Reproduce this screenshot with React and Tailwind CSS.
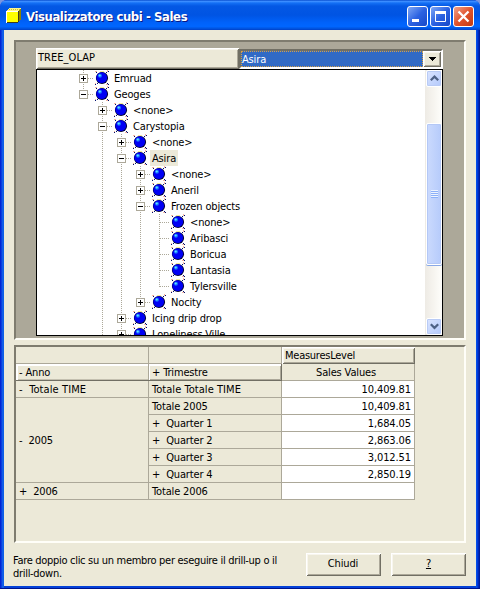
import React from "react";

const WINDOW_FONT = "font-['DejaVu_Sans_Condensed','DejaVu_Sans',sans-serif]";

const sunken =
  "border-2 border-t-[#7f7c6f] border-l-[#7f7c6f] border-r-[#fffef8] border-b-[#fffef8]";
const raised =
  "bg-[#ece9d8] shadow-[inset_1px_1px_0_#fff,inset_-1px_-1px_0_#716f64,inset_2px_2px_0_#f8f6ee,inset_-2px_-2px_0_#aca899]";

// Each row: depth, expander state, label, and which ancestor columns keep a guide line.
const tree = [
  { box: "+", label: "Emruad", own: "full", guides: [] },
  { box: "-", label: "Geoges", own: "top", guides: [] },
  { box: "+", label: "<none>", own: "full", guides: [0] },
  { box: "-", label: "Carystopia", own: "full", guides: [0] },
  { box: "+", label: "<none>", own: "full", guides: [0, 1] },
  { box: "-", label: "Asira", own: "full", guides: [0, 1], selected: true },
  { box: "+", label: "<none>", own: "full", guides: [0, 1, 1] },
  { box: "+", label: "Aneril", own: "full", guides: [0, 1, 1] },
  { box: "-", label: "Frozen objects", own: "full", guides: [0, 1, 1] },
  { label: "<none>", own: "full", guides: [0, 1, 1, 1] },
  { label: "Aribasci", own: "full", guides: [0, 1, 1, 1] },
  { label: "Boricua", own: "full", guides: [0, 1, 1, 1] },
  { label: "Lantasia", own: "full", guides: [0, 1, 1, 1] },
  { label: "Tylersville", own: "top", guides: [0, 1, 1, 1] },
  { box: "+", label: "Nocity", own: "top", guides: [0, 1, 1] },
  { box: "+", label: "Icing drip drop", own: "full", guides: [0, 1] },
  { box: "+", label: "Loneliness-Ville", own: "full", guides: [0, 1] },
];

const quarters = [
  ["Totale 2005", "10,409.81"],
  ["+\u00a0 Quarter 1", "1,684.05"],
  ["+\u00a0 Quarter 2", "2,863.06"],
  ["+\u00a0 Quarter 3", "3,012.51"],
  ["+\u00a0 Quarter 4", "2,850.19"],
];

function Guide() {
  return (
    <svg className="block h-4 w-[19px] shrink-0" shapeRendering="crispEdges">
      <path d="M9.5 0V16" stroke="#aca899" strokeDasharray="1 1" />
    </svg>
  );
}

function Junction({ box, own }) {
  return (
    <svg className="block h-4 w-[19px] shrink-0" shapeRendering="crispEdges" fill="none">
      <path d={own === "top" ? "M9.5 0V9" : "M9.5 0V16"} stroke="#aca899" strokeDasharray="1 1" />
      <path d="M10 8.5H19" stroke="#aca899" strokeDasharray="1 1" />
      {box && <rect x="5.5" y="4.5" width="8" height="8" fill="#fff" stroke="#aca899" />}
      {box && <path d="M7 8.5H12" stroke="#000" />}
      {box === "+" && <path d="M9.5 6V11" stroke="#000" />}
    </svg>
  );
}

function Ball() {
  return (
    <svg className="ml-px block h-4 w-4 shrink-0" viewBox="0 0 16 16">
      <g shapeRendering="crispEdges">
        <path d="M1 1h2v1h-2zM13 0h1v2h-1zM1 13h1v2h-1zM12 14h2v1h-2z" fill="#f5b8a0" />
        <path d="M2 2h1v1h-1zM12 2h1v1h-1zM14 1h1v1h-1zM1 14h1v1h-1zM3 13h1v1h-1zM14 14h1v1h-1zM13 13h1v1h-1z" fill="#001070" />
        <path d="M6 1h4v1h-4zM3 4h1v1h-1zM3 11h1v1h-1z" fill="#f4ec9a" />
      </g>
      <circle cx="8" cy="8" r="6.1" fill="#000038" />
      <circle cx="7.7" cy="7.7" r="5.4" fill="#0000f4" />
      <circle cx="6" cy="5.8" r="2" fill="#1673ff" />
      <circle cx="5.7" cy="5.5" r="1.1" fill="#5fe0ff" />
    </svg>
  );
}

function TreeRow({ row }) {
  return (
    <div className="flex h-4 shrink-0 items-center pl-[37px]">
      {row.guides.map((on, i) =>
        on ? <Guide key={i} /> : <span key={i} className="h-4 w-[19px] shrink-0" />
      )}
      <Junction box={row.box} own={row.own} />
      <Ball />
      <span
        className={`ml-[2px] h-4 whitespace-pre px-[2px] leading-[17px] ${
          row.selected ? "bg-[#ece9d8]" : ""
        }`}
      >
        {row.label}
      </span>
    </div>
  );
}

function ScrollButton({ down }) {
  return (
    <div className="flex h-[17px] w-[16px] items-center justify-center rounded-[2px] border border-white bg-gradient-to-br from-[#dbe5ff] to-[#b3c9fb] shadow-[inset_0_0_0_1px_#b9cbf5]">
      <svg width="9" height="7" viewBox="0 0 9 7" fill="none">
        <path d={down ? "M.8 1.2 4.5 4.9 8.2 1.2" : "M.8 5.3 4.5 1.6 8.2 5.3"} stroke="#4d6185" strokeWidth="2.2" />
      </svg>
    </div>
  );
}

function CaptionButton({ close, children }) {
  return (
    <div
      className={`flex h-[21px] w-[21px] items-center justify-center rounded-[3px] border border-white ${
        close
          ? "bg-gradient-to-br from-[#f0a088] via-[#e0532c] to-[#c23a10]"
          : "bg-gradient-to-br from-[#7fa6f4] via-[#2c62e2] to-[#1748c8]"
      }`}
    >
      <svg width="19" height="19" viewBox="0 0 19 19" fill="none">
        {children}
      </svg>
    </div>
  );
}

function Label({ children }) {
  return (
    <div className="h-[17px] whitespace-pre border-b border-r border-[#aca899] pl-[3px] leading-[18px]">
      {children}
    </div>
  );
}

function Value({ children }) {
  return (
    <div className="h-[17px] border-b border-r border-[#aca899] bg-white pr-[3px] text-right leading-[18px] tracking-[-0.1px]">
      {children}
    </div>
  );
}

export default function App() {
  return (
    <div className="h-[589px] w-[480px] overflow-hidden bg-[#7a96df]">
      <div
        className={`flex h-full w-full flex-col overflow-hidden rounded-t-[7px] bg-[#0831d9] text-[11px] tracking-[-0.15px] text-black ${WINDOW_FONT}`}
      >
        <header className="flex h-[30px] shrink-0 items-center bg-[linear-gradient(180deg,#0a4fd0_0%,#3a8cff_5%,#1470f5_10%,#0458e4_20%,#0054e3_50%,#0062fa_75%,#0066ff_88%,#0054e0_95%,#0040c8_100%)] pl-[6px] pr-[6px] pt-[3px]">
          <svg className="-mt-0.5 shrink-0" width="16" height="16" viewBox="0 0 16 16" shapeRendering="crispEdges">
            <path d="M0 3 3 0H15V11L12 14H0Z" fill="#fff68a" />
            <path d="M12 3 15 0V11L12 14Z" fill="#8a8200" />
            <path d="M0 3H12V14H0Z" fill="#ffff00" />
            <path d="M0 3H12M.5 3V14M0 14H12" stroke="#fff" strokeWidth="1" />
            <path d="M12.5 3V14M1 14.5H12" stroke="#3d3b20" />
            <path d="M3 1.5H14" stroke="#c9be38" strokeDasharray="1 1" />
          </svg>
          <h1 className="ml-1 flex-1 whitespace-pre pt-px text-[13px] font-bold leading-4 tracking-[-0.43px] text-white [text-shadow:1px_1px_0_#0a1883]">
            Visualizzatore cubi - Sales
          </h1>
          <div className="flex gap-[2px]">
            <CaptionButton>
              <path d="M4 13.5H11" stroke="#fff" strokeWidth="3" />
            </CaptionButton>
            <CaptionButton>
              <path d="M4.5 5V14.5H14.5V5" stroke="#fff" />
              <path d="M4 5.5H15" stroke="#fff" strokeWidth="3" />
            </CaptionButton>
            <CaptionButton close>
              <path d="M4.5 4.5 14.5 14.5M14.5 4.5 4.5 14.5" stroke="#fff" strokeWidth="2.3" />
            </CaptionButton>
          </div>
        </header>

        <div className="flex min-h-0 flex-1 border-b border-[#00138c] bg-[linear-gradient(90deg,#0019cf_0,#0831d9_1px,#166aee_3px,#0855dd_4px,#0855dd_476px,#0046f0_477px,#0030c8_478px,#00138c_480px)] px-1">
          <main className="flex min-w-0 flex-1 flex-col border-b-2 border-[#0441d8] bg-[#ece9d8] px-[10px] pt-[10px]">
            <section className={`h-[300px] shrink-0 bg-[#aca899] pl-5 pt-[6px] ${sunken}`}>
              <div className="flex h-[21px] w-[407px]">
                <div className={`h-[21px] w-[203px] pl-[2px] leading-5 tracking-[0.05px] ${raised}`}>TREE_OLAP</div>
                <div className="mt-px flex h-5 w-[204px] border-2 border-b-white border-l-[#716f64] border-r-white border-t-[#716f64] bg-white">
                  <div className="h-4 w-[182px] bg-[#316ac5] pl-px leading-[17px] text-white outline-1 -outline-offset-1 outline-dotted outline-[#d5a04a]">
                    Asira
                  </div>
                  <div className={`flex h-4 flex-1 items-center justify-center ${raised}`}>
                    <svg width="7" height="4" viewBox="0 0 7 4" shapeRendering="crispEdges">
                      <path d="M0 0H7V1H6V2H5V3H4V4H3V3H2V2H1V1H0Z" />
                    </svg>
                  </div>
                </div>
              </div>
              <div className="flex h-[267px] w-[407px] border border-black bg-white">
                <div className="flex h-[265px] flex-1 flex-col overflow-hidden">
                  {tree.map((row, i) => (
                    <TreeRow key={i} row={row} />
                  ))}
                </div>
                <div className="flex h-[265px] w-[17px] flex-col bg-gradient-to-r from-[#eeebe5] via-[#f6f4ef] to-[#fefefb] pl-px">
                  <ScrollButton />
                  <div className="h-9" />
                  <div className="flex h-[142px] w-4 flex-col items-center justify-center rounded-[2px] border border-white bg-gradient-to-r from-[#cbdafd] to-[#b6cbfb] shadow-[inset_0_0_0_1px_#b4c8f6,0_1px_0_#8aa9e6]">
                    <i className="h-px w-[7px] bg-[#eef4fe]" />
                    <i className="mb-0 h-px w-[7px] bg-[#8cb0f8]" />
                    <i className="h-px w-[7px] bg-[#eef4fe]" />
                    <i className="h-px w-[7px] bg-[#8cb0f8]" />
                    <i className="h-px w-[7px] bg-[#eef4fe]" />
                    <i className="h-px w-[7px] bg-[#8cb0f8]" />
                    <i className="h-px w-[7px] bg-[#eef4fe]" />
                    <i className="h-px w-[7px] bg-[#8cb0f8]" />
                  </div>
                  <div className="flex-1" />
                  <ScrollButton down />
                </div>
              </div>
            </section>

            <section className={`mt-[5px] h-[198px] shrink-0 ${sunken}`}>
              <div className="grid w-[399px] grid-cols-[133px_133px_133px]">
                <Label />
                <Label />
                <div className={`h-[17px] pl-[3px] leading-[18px] tracking-[-0.25px] ${raised}`}>MeasuresLevel</div>
                <div className="col-span-2 grid h-[17px] grid-cols-2 border-b border-[#716f64] shadow-[inset_0_-1px_0_#aca899]">
                  <div className="h-4 border-r border-[#aca899] pl-[3px] leading-[18px] shadow-[inset_2px_2px_0_#fff,inset_0_-1px_0_#c4c0b0]">- Anno</div>
                  <div className="h-4 border-r border-[#716f64] pl-[3px] leading-[18px] shadow-[inset_1px_2px_0_#fff,inset_-1px_-1px_0_#aca899]">+ Trimestre</div>
                </div>
                <div className="h-[17px] border-b border-r border-[#aca899] pr-1 text-center leading-[18px]">Sales Values</div>
                <Label><span className="tracking-[0.1px]">{"-\u00a0 Totale TIME"}</span></Label>
                <Label><span className="tracking-[0.05px]">Totale Totale TIME</span></Label>
                <Value>10,409.81</Value>
                <div className="row-span-5 flex items-center border-b border-r border-[#aca899] pl-[3px] pt-[3px]">{"-\u00a0 2005"}</div>
                {quarters.map(([name, value]) => (
                  <React.Fragment key={name}>
                    <Label>{name}</Label>
                    <Value>{value}</Value>
                  </React.Fragment>
                ))}
                <Label>{"+\u00a0 2006"}</Label>
                <Label>Totale 2006</Label>
                <Value />
              </div>
            </section>

            <footer className="flex pt-[10px]">
              <p className="-ml-px w-[293px] whitespace-pre pt-px leading-[13px] tracking-[-0.3px]">
                {"Fare doppio clic su un membro per eseguire il drill-up o il\ndrill-down."}
              </p>
              <div className={`flex h-[23px] w-[75px] items-center justify-center pr-px ${raised}`}>Chiudi</div>
              <div className={`ml-[10px] flex h-[23px] w-[75px] items-center justify-center underline ${raised}`}>?</div>
            </footer>
          </main>
        </div>
      </div>
    </div>
  );
}
